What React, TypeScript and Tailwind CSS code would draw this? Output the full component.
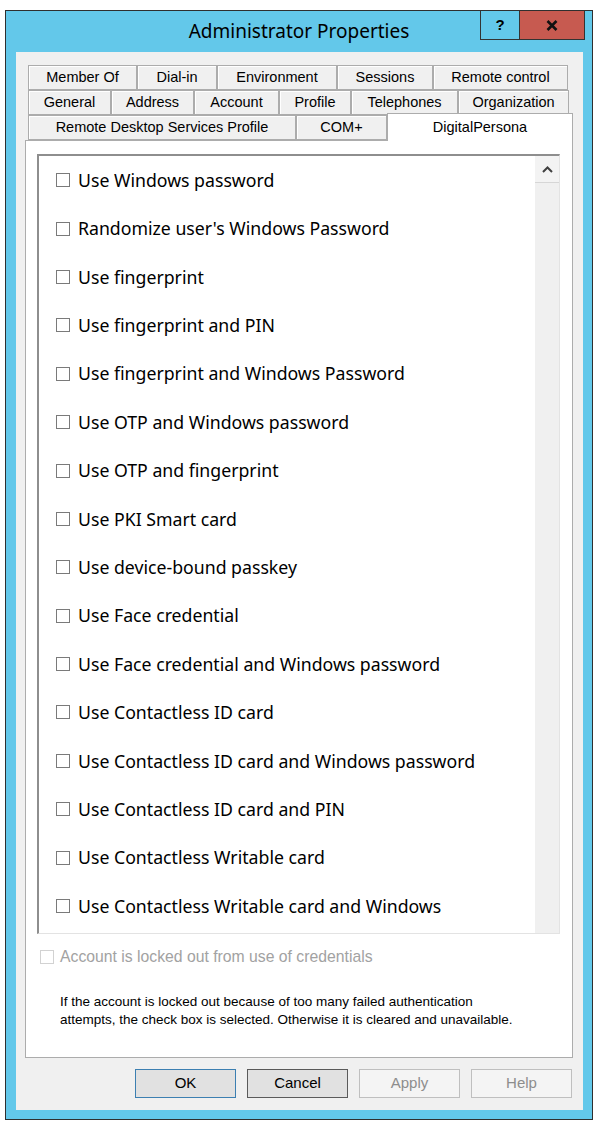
const tabRows: { label: string; w: string }[][] = [
  [
    { label: 'Member Of', w: 'w-[109px]' },
    { label: 'Dial-in', w: 'w-[80px]' },
    { label: 'Environment', w: 'w-[120px]' },
    { label: 'Sessions', w: 'w-[96px]' },
    { label: 'Remote control', w: 'w-[135px]' },
  ],
  [
    { label: 'General', w: 'w-[83px]' },
    { label: 'Address', w: 'w-[83px]' },
    { label: 'Account', w: 'w-[85px]' },
    { label: 'Profile', w: 'w-[72px]' },
    { label: 'Telephones', w: 'w-[107px]' },
    { label: 'Organization', w: 'w-[111px]' },
  ],
  [
    { label: 'Remote Desktop Services Profile', w: 'w-[268px]' },
    { label: 'COM+', w: 'w-[91px]' },
  ],
];

const options = [
  'Use Windows password',
  "Randomize user's Windows Password",
  'Use fingerprint',
  'Use fingerprint and PIN',
  'Use fingerprint and Windows Password',
  'Use OTP and Windows password',
  'Use OTP and fingerprint',
  'Use PKI Smart card',
  'Use device-bound passkey',
  'Use Face credential',
  'Use Face credential and Windows password',
  'Use Contactless ID card',
  'Use Contactless ID card and Windows password',
  'Use Contactless ID card and PIN',
  'Use Contactless Writable card',
  'Use Contactless Writable card and Windows',
];

const Tab = ({ label, w }: { label: string; w: string }) => (
  <div
    className={`${w} h-[25px] shrink-0 flex items-center justify-center border border-[#acacac] bg-[#f0f0f0] shadow-[inset_1px_1px_0_#ffffff] text-[14.5px] text-black`}
  >
    {label}
  </div>
);

const DialogButton = ({
  label,
  variant,
}: {
  label: string;
  variant: 'default' | 'normal' | 'disabled';
}) => {
  const styles =
    variant === 'default'
      ? 'border-[#3c7fb1] bg-[#e1e1e1] text-black'
      : variant === 'normal'
        ? 'border-[#5a5a5a] bg-[#e1e1e1] text-black'
        : 'border-[#bfbfbf] bg-[#f4f4f4] text-[#8d8d8d]';
  return (
    <div
      className={`w-[101px] h-[29px] flex items-center justify-center border ${styles} text-[15px]`}
    >
      {label}
    </div>
  );
};

export default function App() {
  return (
    <div
      className="w-[599px] h-[1129px] bg-white pt-[10px] pl-[5px]"
      style={{ fontFamily: '"Liberation Sans", Arial, sans-serif' }}
    >
      <div className="w-[588px] h-[1110px] border border-[#2f2f2f] bg-[#63c8ea] flex flex-col">
        {/* title bar */}
        <div className="h-[41px] shrink-0 grid grid-cols-[1fr_auto_1fr] items-start">
          <div />
          <div
            className="h-[41px] flex items-center text-[19px] text-black"
            style={{ fontFamily: '"Noto Sans", sans-serif' }}
          >
            Administrator Properties
          </div>
          <div className="flex justify-end pr-[7px]">
            <div className="w-[40px] h-[29px] border-x border-b border-[#333333] bg-[#63c8ea] flex items-center justify-center text-[15px] font-bold text-black">
              ?
            </div>
            <div className="w-[65px] h-[29px] border-r border-b border-[#333333] bg-[#c75a50] flex items-center justify-center">
              <svg width="12" height="11" viewBox="0 0 12 11">
                <path d="M1.5 1 L10.5 10 M10.5 1 L1.5 10" stroke="#111" strokeWidth="2.6" />
              </svg>
            </div>
          </div>
        </div>

        {/* dialog body */}
        <div className="ml-[10px] w-[567px] h-[1058px] bg-[#f0f0f0] flex flex-col">
          {/* tabs */}
          <div className="mt-[13px] ml-[12px] flex flex-col">
            {tabRows.slice(0, 2).map((row, i) => (
              <div key={i} className="flex">
                {row.map(t => (
                  <Tab key={t.label} {...t} />
                ))}
              </div>
            ))}
            <div className="flex items-end h-[25px]">
              {tabRows[2].map(t => (
                <Tab key={t.label} {...t} />
              ))}
              <div className="relative z-10 -mb-px w-[186px] h-[28px] shrink-0 border-x border-t border-[#acacac] bg-white flex justify-center pt-[3px] text-[14.5px] text-black">
                DigitalPersona
              </div>
            </div>
          </div>

          {/* tab page */}
          <div className="ml-[9px] w-[548px] h-[918px] shrink-0 border border-[#acacac] bg-white flex flex-col">
            <div className="mt-[13px] ml-[11px] w-[523px] h-[780px] shrink-0 border-t-2 border-l-2 border-t-[#8e8e8e] border-l-[#8e8e8e] border-r border-b border-r-[#e3e3e3] border-b-[#e3e3e3] flex">
              <div
                className="flex-1 overflow-hidden flex flex-col pl-[17px]"
                style={{ fontFamily: '"Noto Sans", sans-serif' }}
              >
                {options.map(o => (
                  <div key={o} className="h-[48.4px] shrink-0 flex items-center gap-[8px]">
                    <div className="w-[14px] h-[14px] border border-[#7a7a7a] bg-white shrink-0" />
                    <span className="text-[17.7px] text-black whitespace-nowrap">{o}</span>
                  </div>
                ))}
              </div>
              <div className="w-[24px] bg-[#f0f0f0] flex flex-col">
                <div className="h-[27px] border-b border-[#d6d6d6] bg-[#f3f3f3] flex items-center justify-center">
                  <svg width="11" height="7" viewBox="0 0 11 7">
                    <path d="M1 6 L5.5 1.5 L10 6" fill="none" stroke="#404040" strokeWidth="2" />
                  </svg>
                </div>
              </div>
            </div>

            <div className="mt-[11px] ml-[14px] flex items-center gap-[6px]">
              <div className="w-[14px] h-[14px] border border-[#d2d2d2] bg-white shrink-0" />
              <span className="text-[15.75px] text-[#a2a2a2]">
                Account is locked out from use of credentials
              </span>
            </div>

            <div className="mt-[24px] ml-[34px] text-[13.5px] leading-[18px] text-black">
              <p>If the account is locked out because of too many failed authentication</p>
              <p>attempts, the check box is selected. Otherwise it is cleared and unavailable.</p>
            </div>
          </div>

          {/* buttons */}
          <div className="mt-[11px] flex justify-end gap-[11px] pr-[11px]">
            <DialogButton label="OK" variant="default" />
            <DialogButton label="Cancel" variant="normal" />
            <DialogButton label="Apply" variant="disabled" />
            <DialogButton label="Help" variant="disabled" />
          </div>
        </div>
      </div>
    </div>
  );
}
